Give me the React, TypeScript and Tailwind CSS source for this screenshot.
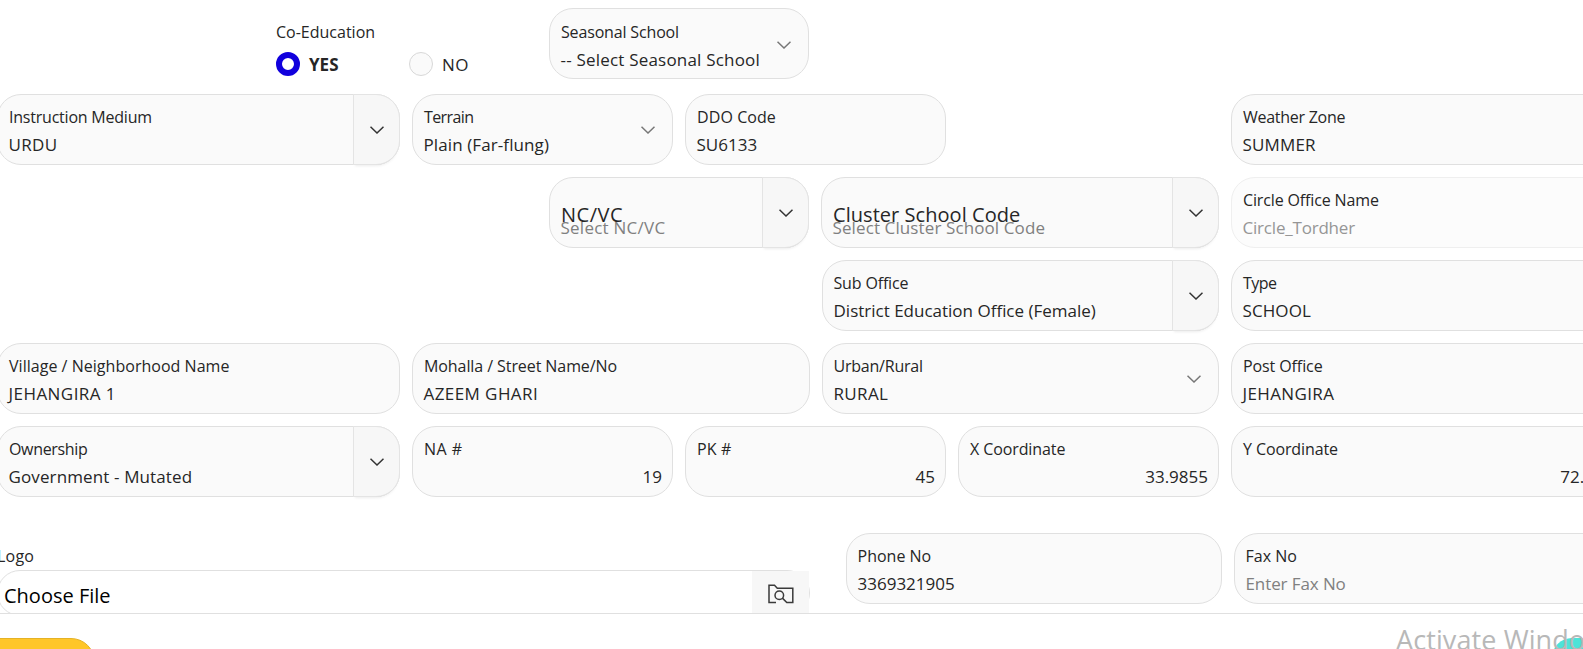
import { clsx } from "clsx";

function Chevron({ className }: { className?: string }) {
  return (
    <svg viewBox="0 0 14 8" className={clsx("h-2 w-3.5 shrink-0 fill-none", className)} strokeWidth="1.5">
      <path d="M0.5 0.7 L7 7 L13.5 0.7" stroke="currentColor" />
    </svg>
  );
}

type FieldProps = {
  label: string;
  value: string;
  width?: string;
  kind?: "text" | "select" | "combo";
  align?: "left" | "right";
  placeholder?: boolean;
  disabled?: boolean;
  bigLabel?: boolean;
  labelClass?: string;
  valueClass?: string;
};

function Field({
  label,
  value,
  width = "w-[261px]",
  kind = "text",
  align = "left",
  placeholder,
  disabled,
  bigLabel,
  labelClass,
  valueClass,
}: FieldProps) {
  return (
    <div
      className={clsx(
        "relative flex h-[71px] shrink-0 rounded-3xl border",
        disabled ? "border-[#efefef] bg-[#fcfcfc]" : "border-[#e0e0e0] bg-[#fafafa]",
        width,
      )}
    >
      <div className={clsx("flex min-w-0 grow flex-col pt-3", align === "right" ? "pr-2.5 pl-[11px]" : "px-[11px]")}>
        {bigLabel ? (
          <div className="h-5">
            <div className={clsx("absolute top-[22px] text-xl leading-[30px] whitespace-nowrap", labelClass)}>{label}</div>
          </div>
        ) : (
          <div className={clsx("text-base leading-5 whitespace-nowrap", labelClass)}>{label}</div>
        )}
        <div
          className={clsx(
            "mt-1.5 text-[17px] leading-6 whitespace-nowrap",
            align === "right" ? "text-right" : "-ml-[0.5px]",
            disabled ? "text-[#969696]" : placeholder ? "text-[#808080]" : "text-[#262626]",
            valueClass,
          )}
        >
          {value}
        </div>
      </div>
      {kind === "select" && (
        <div className="flex w-[31px] shrink-0 pt-[31px] text-[#777]">
          <Chevron />
        </div>
      )}
      {kind === "combo" && (
        <div className="-my-px -mr-px flex w-[47px] shrink-0 items-start justify-center rounded-r-3xl border border-[#e4e4e4] bg-[#f7f7f7] pt-[31px] shadow-[0_3px_3px_-2px_rgba(0,0,0,0.08)]">
          <Chevron className="text-[#333]" />
        </div>
      )}
    </div>
  );
}

function FolderSearch() {
  return (
    <svg viewBox="0 0 26 20" className="h-5 w-[26px] fill-none" stroke="#3a3a3a" strokeWidth="1.5">
      <path d="M8 18.5 H1 V1.2 H6.5 L9.3 4.2 H24.8 V18.5 H18.8 L14.4 14.1" />
      <circle cx="11.3" cy="11.2" r="4.3" />
    </svg>
  );
}

export default function App() {
  return (
    <div className="relative flex h-[649px] w-full flex-col overflow-hidden bg-white font-['Open_Sans','Noto_Sans',sans-serif] text-[#262626]">
      <main className="h-[613px] shrink-0 overflow-hidden">
        <div className="-ml-[3px] flex w-[1700px] flex-col gap-3 pt-2">
          <div className="mb-[3px] flex">
            <div className="ml-[279px] w-[273px] pt-[14px]">
              <div className="text-base leading-5">Co-Education</div>
              <div className="mt-2.5 flex h-6 items-center">
                <div className="flex w-[133px] items-center">
                  <span className="size-6 rounded-full border-[6px] border-[#1100dd] bg-white" />
                  <span className="ml-[9px] pt-px text-[17px] leading-6 font-bold">YES</span>
                </div>
                <div className="flex items-center">
                  <span className="size-6 rounded-full border border-[#d8d8d8] bg-[#fafafa]" />
                  <span className="ml-[9px] pt-px text-[17px] leading-6 tracking-[0.4px]">NO</span>
                </div>
              </div>
            </div>
            <Field label="Seasonal School" value="-- Select Seasonal School" kind="select" width="w-[260px] pt-px" labelClass="tracking-[-0.16px]" valueClass="tracking-[0.2px]" />
          </div>

          <div className="flex gap-3">
            <Field label="Instruction Medium" value="URDU" kind="combo" width="w-[403px]" labelClass="tracking-[-0.22px]" valueClass="tracking-[0.35px]" />
            <Field label="Terrain" value="Plain (Far-flung)" kind="select" labelClass="tracking-[-0.6px]" valueClass="tracking-[0.1px]" />
            <Field label="DDO Code" value="SU6133" labelClass="tracking-[0.08px]" />
            <div className="w-[261px]" />
            <Field label="Weather Zone" value="SUMMER" width="w-[403px]" labelClass="tracking-[-0.27px]" valueClass="tracking-[0.15px]" />
          </div>

          <div className="flex gap-3 pl-[552px]">
            <Field label="NC/VC" value="Select NC/VC" kind="combo" width="w-[260px]" placeholder bigLabel labelClass="tracking-[0.5px]" valueClass="tracking-[0.25px]" />
            <Field label="Cluster School Code" value="Select Cluster School Code" kind="combo" width="w-[398px]" placeholder bigLabel labelClass="tracking-[0.05px]" valueClass="tracking-[0.11px]" />
            <Field label="Circle Office Name" value="Circle_Tordher" width="w-[403px]" disabled labelClass="tracking-[-0.14px]" valueClass="tracking-[-0.2px]" />
          </div>

          <div className="flex gap-3 pl-[825px]">
            <Field label="Sub Office" value="District Education Office (Female)" kind="combo" width="w-[397px]" labelClass="-ml-[0.5px] tracking-[-0.16px]" />
            <Field label="Type" value="SCHOOL" width="w-[403px]" labelClass="tracking-[-0.5px]" valueClass="tracking-[0.1px]" />
          </div>

          <div className="flex gap-3">
            <Field label="Village / Neighborhood Name" value="JEHANGIRA 1" width="w-[403px]" labelClass="tracking-[0.03px]" valueClass="tracking-[0.45px]" />
            <Field label="Mohalla / Street Name/No" value="AZEEM GHARI" width="w-[398px]" labelClass="tracking-[-0.08px]" valueClass="tracking-[0.42px]" />
            <Field label="Urban/Rural" value="RURAL" kind="select" width="w-[397px]" labelClass="-ml-[0.5px] tracking-[-0.22px]" valueClass="tracking-[0.35px]" />
            <Field label="Post Office" value="JEHANGIRA" width="w-[403px]" labelClass="tracking-[-0.1px]" valueClass="tracking-[0.38px]" />
          </div>

          <div className="flex gap-3">
            <Field label="Ownership" value="Government - Mutated" kind="combo" width="w-[403px]" labelClass="tracking-[-0.33px]" valueClass="tracking-[0.12px]" />
            <Field label="NA #" value="19" align="right" labelClass="tracking-[0.5px]" />
            <Field label="PK #" value="45" align="right" labelClass="tracking-[0.1px]" />
            <Field label="X Coordinate" value="33.9855" align="right" labelClass="tracking-[-0.1px]" />
            <Field label="Y Coordinate" value="72.1422" align="right" width="w-[403px]" labelClass="tracking-[-0.1px]" />
          </div>

          <div className="mt-6 flex">
            <div className="w-[813px] pt-[13px]">
              <div className="text-base leading-5 tracking-[0.2px]">Logo</div>
              <div className="mt-1 flex h-[46px] rounded-3xl border border-[#e0e0e0] bg-white">
                <div className="grow pt-2.5 pl-1.5 text-xl leading-[30px] text-black">Choose File</div>
                <div className="flex w-[57px] justify-center bg-[#f7f7f7] pt-[13px]">
                  <FolderSearch />
                </div>
              </div>
            </div>
            <div className="ml-9 flex gap-3">
              <Field label="Phone No" value="3369321905" width="w-[376px]" labelClass="-ml-[0.5px]" />
              <Field label="Fax No" value="Enter Fax No" width="w-[403px]" placeholder labelClass="-ml-[0.5px]" valueClass="tracking-[-0.1px]" />
            </div>
          </div>
        </div>
      </main>

      <footer className="flex grow items-start justify-between border-t border-[#e0e0e0] pt-6">
        <div className="-ml-6 h-12 w-[119px] shrink-0 rounded-3xl border border-[#e5b225] bg-[#ffc629]" />
        <div className="-mr-8 h-12 w-[63px] shrink-0 rounded-[20px] bg-[#4de3d8]" />
      </footer>

      <div className="absolute top-[621px] left-[1396px] text-[27px] leading-[37px] tracking-[0.1px] whitespace-nowrap text-[#b8b8b8]">
        Activate Windows
      </div>
    </div>
  );
}
